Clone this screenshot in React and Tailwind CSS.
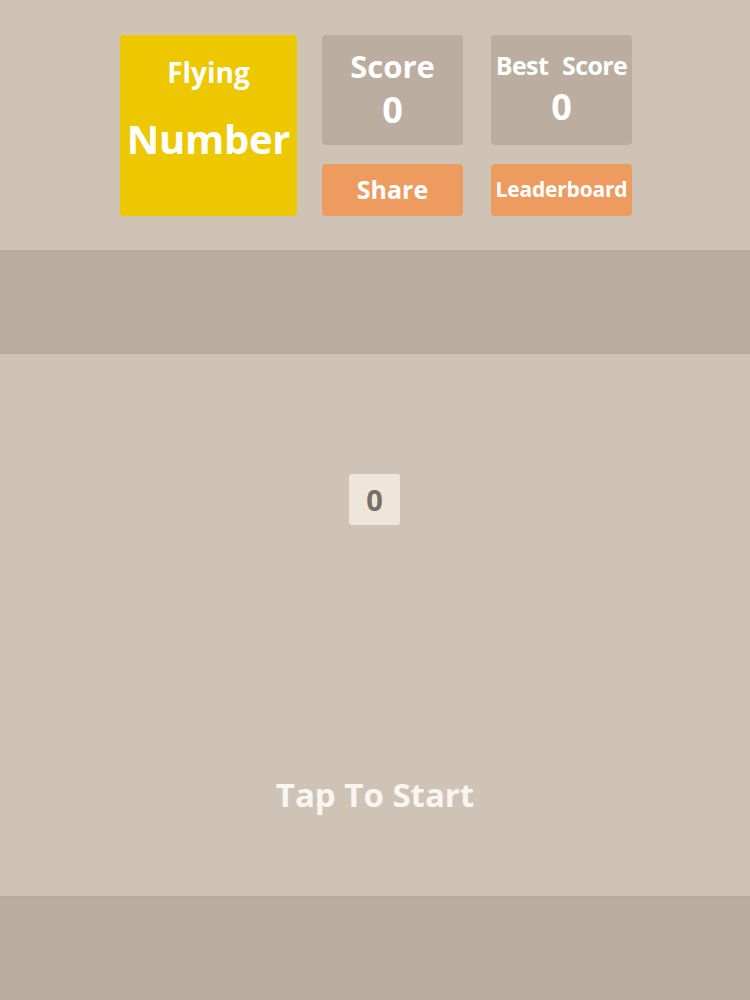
export default function App() {
  return (
    <div className="w-[750px] h-[1000px] flex flex-col bg-[#cfc3b6] overflow-hidden" style={{ fontFamily: '"Open Sans", "Noto Sans", sans-serif' }}>
      {/* header */}
      <div className="h-[250px] flex justify-center gap-[25px] pt-[35px] pl-[2px]">
        <div className="w-[177px] h-[181px] rounded-[4px] bg-[#edc800] flex flex-col items-center text-white font-bold">
          <div className="mt-[17px] text-[28px] leading-[40px]">Flying</div>
          <div className="mt-[22px] text-[40px] leading-[50px] tracking-[-0.3px]">Number</div>
        </div>
        <div className="flex flex-col gap-[19px]">
          <div className="w-[141px] h-[110px] rounded-[4px] bg-[#bbad9f] flex flex-col items-center text-white font-bold">
            <div className="mt-[10px] text-[31px] leading-[42px]">Score</div>
            <div className="text-[36px] leading-[44px] mt-[1px]">0</div>
          </div>
          <div className="w-[141px] h-[52px] rounded-[4px] bg-[#ee9b60] flex items-center justify-center text-white font-bold text-[25px]">Share</div>
        </div>
        <div className="flex flex-col gap-[19px] ml-[3px]">
          <div className="w-[141px] h-[110px] rounded-[4px] bg-[#bbad9f] flex flex-col items-center text-white font-bold">
            <div className="mt-[13px] text-[25px] leading-[34px] tracking-[-0.6px] [word-spacing:8px]">Best Score</div>
            <div className="mt-[3px] text-[36px] leading-[44px]">0</div>
          </div>
          <div className="w-[141px] h-[52px] rounded-[4px] bg-[#ee9b60] flex items-center justify-center text-white font-bold text-[21px] tracking-[-0.2px]">Leaderboard</div>
        </div>
      </div>
      {/* top band */}
      <div className="h-[104px] bg-[#baad9f] border-y border-[#b8aa9c]" />
      {/* play area */}
      <div className="flex-1 flex flex-col items-center">
        <div className="mt-[120px] w-[51px] h-[51px] rounded-[3px] bg-[#eee5db] flex items-center justify-center text-[#776e65] font-bold text-[29px] ml-[-1px]">0</div>
        <div className="mt-[245px] text-[33px] font-bold text-[#f9f6f2] leading-[50px]">Tap To Start</div>
      </div>
      {/* bottom band */}
      <div className="h-[104px] bg-[#baad9f] border-t border-[#b5a899]" />
    </div>
  );
}
